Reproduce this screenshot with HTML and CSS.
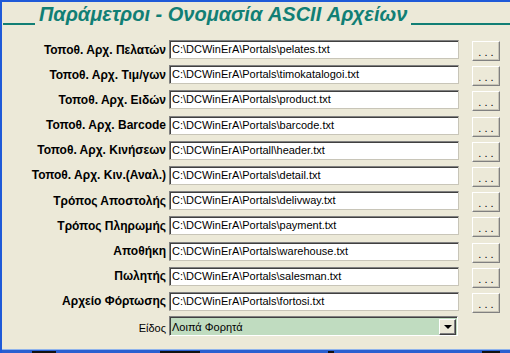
FILE: index.html
```html
<!DOCTYPE html>
<html lang="el">
<head>
<meta charset="utf-8">
<title>Παράμετροι - Ονομασία ASCII Αρχείων</title>
<link rel="stylesheet" href="styles.css">
</head>
<body>
<div class="window">
  <div class="title">
    <span class="rule rule-left"></span>
    <span class="title-text">Παράμετροι - Ονομασία ASCII Αρχείων</span>
    <span class="rule rule-right"></span>
  </div>
  <div class="form">
    <label class="lbl">Τοποθ. Αρχ. Πελατών</label>
    <div class="field">C:\DCWinErA\Portals\pelates.txt</div>
    <button class="browse">. . .</button>

    <label class="lbl">Τοποθ. Αρχ. Τιμ/γων</label>
    <div class="field">C:\DCWinErA\Portals\timokatalogoi.txt</div>
    <button class="browse">. . .</button>

    <label class="lbl">Τοποθ. Αρχ. Ειδών</label>
    <div class="field">C:\DCWinErA\Portals\product.txt</div>
    <button class="browse">. . .</button>

    <label class="lbl">Τοποθ. Αρχ. Barcode</label>
    <div class="field">C:\DCWinErA\Portals\barcode.txt</div>
    <button class="browse">. . .</button>

    <label class="lbl">Τοποθ. Αρχ. Κινήσεων</label>
    <div class="field">C:\DCWinErA\Portall\header.txt</div>
    <button class="browse">. . .</button>

    <label class="lbl">Τοποθ. Αρχ. Κιν.(Αναλ.)</label>
    <div class="field">C:\DCWinErA\Portals\detail.txt</div>
    <button class="browse">. . .</button>

    <label class="lbl">Τρόπος Αποστολής</label>
    <div class="field">C:\DCWinErA\Portals\delivway.txt</div>
    <button class="browse">. . .</button>

    <label class="lbl">Τρόπος Πληρωμής</label>
    <div class="field">C:\DCWinErA\Portals\payment.txt</div>
    <button class="browse">. . .</button>

    <label class="lbl">Αποθήκη</label>
    <div class="field">C:\DCWinErA\Portals\warehouse.txt</div>
    <button class="browse">. . .</button>

    <label class="lbl">Πωλητής</label>
    <div class="field">C:\DCWinErA\Portals\salesman.txt</div>
    <button class="browse">. . .</button>

    <label class="lbl">Αρχείο Φόρτωσης</label>
    <div class="field">C:\DCWinErA\Portals\fortosi.txt</div>
    <button class="browse">. . .</button>

    <label class="lbl lbl-plain">Είδος</label>
    <div class="combo">
      <span class="combo-text">Λοιπά Φορητά</span>
      <span class="combo-btn"><span class="arrow"></span></span>
    </div>
  </div>
  <div class="taskstrip">
    <span class="frag f1"></span>
    <span class="frag f2"></span>
    <span class="frag f3"></span>
    <span class="frag f4"></span>
  </div>
</div>
</body>
</html>
```

FILE: styles.css
```css
html, body {
  margin: 0;
  padding: 0;
  background: #ece9d8;
}

.window {
  width: 510px;
  height: 353px;
  box-sizing: border-box;
  border-top: 2px solid #1f5ad8;
  border-left: 2px solid #1f5ad8;
  background: #ece9d8;
  display: flex;
  flex-direction: column;
  overflow: hidden;
  font-family: "Liberation Sans", Arial, sans-serif;
  color: #000;
}

.title {
  display: flex;
  align-items: flex-start;
  height: 26px;
  flex: none;
}

.rule {
  display: block;
  height: 2px;
  background: #117f75;
  margin-top: 21px;
}

.rule-left {
  width: 32px;
  margin-left: 1px;
}

.rule-right {
  flex: 1;
  margin-left: 4px;
}

.title-text {
  font-style: italic;
  font-weight: bold;
  font-size: 20px;
  line-height: 23px;
  color: #117f75;
  margin-top: 1px;
  margin-left: 4px;
  white-space: nowrap;
}

.form {
  display: grid;
  grid-template-columns: 164px 290px 28px;
  grid-auto-rows: 19px;
  column-gap: 3px;
  row-gap: 6.2px;
  margin-top: 12px;
  flex: none;
}

.form .browse {
  margin-left: 10px;
}

.lbl {
  font-weight: bold;
  font-size: 12px;
  text-align: right;
  align-self: center;
  white-space: nowrap;
  line-height: 14px;
}

.lbl-plain {
  font-weight: normal;
  font-size: 11px;
  margin-top: 2px;
}

.field {
  box-sizing: border-box;
  height: 19px;
  background: #fff;
  border-top: 1px solid #808080;
  border-left: 1px solid #808080;
  border-right: 1px solid #c8c5b8;
  border-bottom: 1px solid #c8c5b8;
  box-shadow: inset 1px 1px 0 #404040;
  font-size: 11px;
  line-height: 17px;
  padding-left: 2px;
  white-space: nowrap;
  overflow: hidden;
}

.browse {
  box-sizing: border-box;
  width: 28px;
  height: 20px;
  margin-top: 1px;
  padding: 0;
  background: #ece9d8;
  border-top: 1px solid #fff;
  border-left: 1px solid #fff;
  border-right: 1px solid #808080;
  border-bottom: 1px solid #808080;
  box-shadow: inset -1px -1px 0 #c8c5b8;
  font-family: "Liberation Sans", Arial, sans-serif;
  font-size: 11px;
  line-height: 14px;
  padding-top: 2px;
  color: #000;
  text-align: center;
  white-space: nowrap;
}

.combo {
  box-sizing: border-box;
  height: 20px;
  width: 289px;
  margin-top: -1px;
  background: #c0dcc0;
  border-top: 1px solid #808080;
  border-left: 1px solid #808080;
  border-right: 1px solid #fff;
  border-bottom: 1px solid #fff;
  box-shadow: inset 1px 1px 0 #404040;
  display: flex;
  align-items: center;
  justify-content: space-between;
  padding: 1px 1px 0 2px;
}

.combo-text {
  font-size: 11px;
  line-height: 16px;
  white-space: nowrap;
}

.combo-btn {
  box-sizing: border-box;
  width: 17px;
  height: 16px;
  background: #ece9d8;
  border-top: 1px solid #fff;
  border-left: 1px solid #fff;
  border-right: 1px solid #404040;
  border-bottom: 1px solid #404040;
  box-shadow: inset -1px -1px 0 #808080;
  display: flex;
  align-items: center;
  justify-content: center;
}

.arrow {
  width: 0;
  height: 0;
  border-left: 4px solid transparent;
  border-right: 4px solid transparent;
  border-top: 4px solid #000;
  margin-top: 1px;
}

.taskstrip {
  margin-top: auto;
  height: 3px;
  flex: none;
  border-top: 1px solid #8fb3ec;
  background: #2a5fd0;
  display: flex;
  align-items: flex-end;
}

.frag {
  display: block;
  height: 2px;
  background: #111;
}

.f1 { width: 24px; margin-left: 30px; }
.f2 { width: 40px; margin-left: 104px; }
.f3 { width: 6px; margin-left: 128px; }
.f4 { width: 18px; margin-left: 148px; }
```
